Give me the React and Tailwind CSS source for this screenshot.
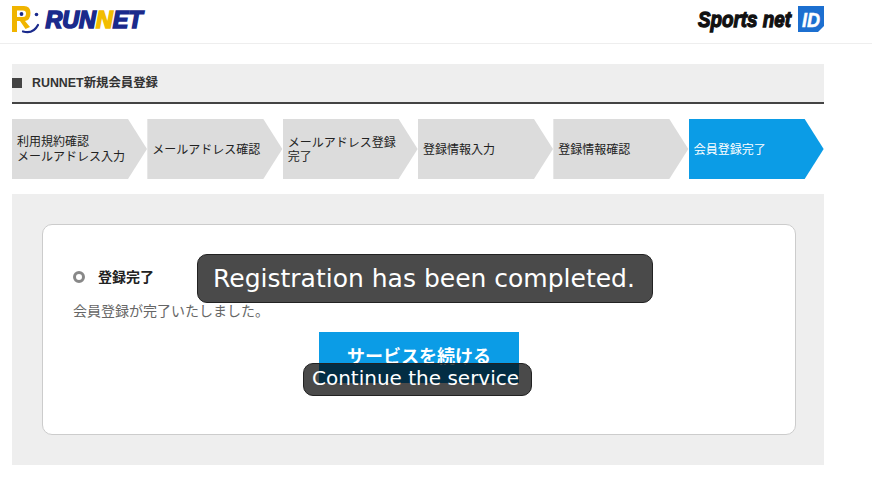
const jp = 'font-["Liberation_Sans","Noto_Sans_CJK_JP",sans-serif]';

function RunnetLogo() {
  return (
    <svg width="136" height="36" viewBox="0 0 136 36" className="block" aria-label="RUNNET">
      <path
        d="M0 6 H12 Q18.5 6 18.5 13 Q18.5 20 13 21 L18 27 L13.5 29 L8 21 H5 V32 H0 Z M5 10.5 V17 H11 Q14 17 14 13.5 Q14 10.5 11 10.5 Z"
        fill="#f0b400"
      />
      <circle cx="9.5" cy="14" r="1.9" fill="#1a2a8c" />
      <circle cx="24.5" cy="14.5" r="1.8" fill="#1a2a8c" />
      <path d="M11 31.5 Q21 34.5 26 25" fill="none" stroke="#1a2a8c" strokeWidth="2.2" strokeLinecap="round" />
      <text x="33.5" y="28" textLength="97" lengthAdjust="spacingAndGlyphs" fontFamily="Liberation Sans, sans-serif" fontWeight="700" fontStyle="italic" fontSize="24" stroke="#1a2a8c" strokeWidth="1.7" fill="#1a2a8c">
        RUN<tspan fill="#f2bd00" stroke="#f2bd00">N</tspan>ET
      </text>
    </svg>
  );
}

function SportsLogo() {
  return (
    <svg width="128" height="36" viewBox="0 0 128 36" className="block" aria-label="Sports net ID">
      <text x="2" y="27" textLength="93" lengthAdjust="spacingAndGlyphs" fontFamily="Liberation Sans, sans-serif" fontWeight="700" fontStyle="italic" fontSize="22" stroke="#111" strokeWidth="1.3" fill="#111">
        Sports net
      </text>
      <path d="M102 6 H128 V26 L122 32 H102 Z" fill="#1c6fd0" />
      <text x="106" y="26.5" textLength="18" lengthAdjust="spacingAndGlyphs" fontFamily="Liberation Sans, sans-serif" fontWeight="700" fontStyle="italic" fontSize="21" fill="#fff" stroke="#fff" strokeWidth="0.5">
        ID
      </text>
    </svg>
  );
}

const steps = [
  { lines: ['利用規約確認', 'メールアドレス入力'], cls: 'leading-[15px]' },
  { lines: ['メールアドレス確認'], cls: 'leading-[14px]' },
  { lines: ['メールアドレス登録', '完了'], cls: 'leading-[14px]' },
  { lines: ['登録情報入力'], cls: 'leading-[14px]' },
  { lines: ['登録情報確認'], cls: 'leading-[14px]' },
  { lines: ['会員登録完了'], cls: 'leading-[14px]', active: true },
];

function Step({ lines, cls, active }) {
  return (
    <div
      className={`flex h-[60px] items-center pl-[5px] pt-[2px] text-[12px] [clip-path:polygon(0_0,116px_0,135px_30px,116px_60px,0_60px)] ${cls} ${
        active ? 'bg-[#0b9ce6] text-white' : 'bg-[#dcdcdc] text-[#222]'
      }`}
    >
      <p>
        {lines.map((l) => (
          <span key={l} className="block whitespace-nowrap">
            {l}
          </span>
        ))}
      </p>
    </div>
  );
}

function Caption({ children, className }) {
  return (
    <div
      className={`absolute flex items-center justify-center rounded-[10px] border border-[#222] bg-black/[0.71] font-["DejaVu_Sans",sans-serif] text-white ${className}`}
    >
      {children}
    </div>
  );
}

export default function App() {
  return (
    <div className={`relative h-[484px] w-[872px] overflow-hidden bg-white ${jp}`}>
      <header className="h-11 border-b border-[#eeeeee]">
        <div className="flex w-[824px] items-center justify-between pl-3">
          <RunnetLogo />
          <SportsLogo />
        </div>
      </header>

      <main className="ml-3 mt-5 w-[812px]">
        <div className="flex h-10 items-center gap-[10px] border-b-2 border-[#444] bg-[#eeeeee]">
          <span className="h-[10px] w-[10px] bg-[#444]" />
          <h1 className="text-[12.4px] font-bold text-[#333]">RUNNET新規会員登録</h1>
        </div>

        <div className="mt-[15px] grid grid-cols-6">
          {steps.map((s) => (
            <Step key={s.lines[0]} {...s} />
          ))}
        </div>

        <section className="mt-[15px] h-[271px] bg-[#eeeeee] pb-[30px] pl-[30px] pr-[28px] pt-[30px]">
          <div className="h-[211px] rounded-[10px] border border-[#cccccc] bg-white px-[30px] pt-[44px]">
            <div className="flex items-center gap-[13px]">
              <span className="h-3 w-3 rounded-full border-[3px] border-[#888]" />
              <h2 className="text-[14px] font-bold leading-[16px] text-[#222]">登録完了</h2>
            </div>
            <p className="mt-[17px] text-[14px] leading-[18px] text-[#666]">会員登録が完了いたしました。</p>
            <div className="mt-[12px] flex justify-center">
              <button className="h-[51px] w-[200px] bg-[#0b9ce6] text-[18px] font-bold text-white">
                サービスを続ける
              </button>
            </div>
          </div>
        </section>
      </main>

      <Caption className="left-[197px] top-[254px] h-[49px] w-[456px] pr-[2px] text-[25px]">
        Registration has been completed.
      </Caption>
      <Caption className="left-[303px] top-[363px] h-[33px] w-[229px] pb-[3px] pr-1 text-[20px]">
        Continue the service
      </Caption>
    </div>
  );
}
